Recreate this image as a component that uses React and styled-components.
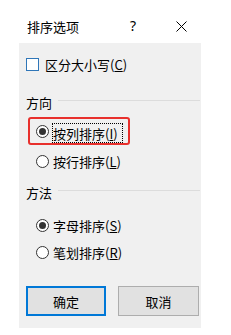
import React from 'react'
import styled, { createGlobalStyle } from 'styled-components'

const GlobalStyle = createGlobalStyle`
	body {
		margin: 0;
		background: #ffffff;
		font-family: 'Noto Sans CJK SC', 'Noto Sans', sans-serif;
		font-size: 13px;
		color: #000000;
	}
`

const Dialog = styled.div`
	display: flex;
	flex-direction: column;
	width: 182px;
	margin-left: 19px;
`

const TitleBar = styled.div`
	display: flex;
	align-items: center;
	height: 43px;
	padding-left: 8px;
	background: #ffffff;
`

const Title = styled.div`
	flex: 1;
	font-size: 13px;
	line-height: 1;
	padding-top: 9px;
`

const Help = styled.div`
	width: 12px;
	margin-right: 37px;
	padding-top: 9px;
	font-family: 'Noto Sans', sans-serif;
	font-size: 14px;
	line-height: 1;
	text-align: center;
`

const Close = styled.div`
	display: flex;
	width: 11px;
	height: 11px;
	margin-right: 14px;
	margin-top: 9px;
`

const Body = styled.div`
	display: flex;
	flex-direction: column;
	padding: 0 0 12px 7px;
	background: #f0f0f0;
`

const Row = styled.div`
	display: flex;
	align-items: center;
	height: ${(p) => p.h || 20}px;
	margin-top: ${(p) => p.mt || 0}px;
	margin-left: ${(p) => p.ml || 0}px;
	white-space: nowrap;
	line-height: 1;
`

const CheckBox = styled.span`
	box-sizing: border-box;
	width: 13px;
	height: 13px;
	margin-right: 6px;
	border: 1px solid #2f76b8;
	background: #ffffff;
`

const Radio = styled.span`
	box-sizing: border-box;
	display: flex;
	align-items: center;
	justify-content: center;
	width: 13px;
	height: 13px;
	margin-right: 4px;
	border: 1px solid #333333;
	border-radius: 50%;
	background: #ffffff;

	&::after {
		content: '';
		display: ${(p) => (p.checked ? 'block' : 'none')};
		width: 7px;
		height: 7px;
		border-radius: 50%;
		background: #333333;
	}
`

const GroupHeader = styled.div`
	display: flex;
	align-items: flex-start;
	height: 18px;
	margin-top: ${(p) => p.mt}px;
	line-height: 18px;
`

const GroupLine = styled.div`
	flex: 1;
	height: 1px;
	margin: 6px 1px 0 6px;
	background: #dcdcdc;
`

const Highlight = styled.div`
	box-sizing: border-box;
	display: flex;
	align-items: center;
	align-self: flex-start;
	height: 28px;
	margin: 5px 0 0 2px;
	padding: 0 5px 0 6px;
	border: 2px solid #e8302c;
	border-radius: 3px;
`

const FocusLabel = styled.span`
	display: flex;
	align-items: center;
	height: 20px;
	margin-left: -1px;
	margin-top: 4px;
	padding: 0 5px 0 1px;
	outline: 1px dotted #000000;
	outline-offset: -1px;
`

const Key = styled.span`
	text-decoration: underline;
	text-underline-offset: 1px;
`

const Buttons = styled.div`
	display: flex;
	gap: 12px;
	margin-top: 24px;
`

const Button = styled.div`
	box-sizing: border-box;
	display: flex;
	align-items: center;
	justify-content: center;
	width: ${(p) => p.w}px;
	height: 30px;
	background: #e1e1e1;
	border: ${(p) => (p.primary ? '2px solid #0078d7' : '1px solid #adadad')};
`

const Label = ({ text, k }) => (
	<span>
		{text}(<Key>{k}</Key>)
	</span>
)

export default function App() {
	return (
		<>
			<GlobalStyle />
			<Dialog>
				<TitleBar>
					<Title>排序选项</Title>
					<Help>?</Help>
					<Close>
						<svg width="11" height="11" viewBox="0 0 11 11">
							<path d="M0.5 0.5L10.5 10.5M10.5 0.5L0.5 10.5" stroke="#000" strokeWidth="1" />
						</svg>
					</Close>
				</TitleBar>
				<Body>
					<Row h={43}>
						<CheckBox />
						<Label text="区分大小写" k="C" />
					</Row>
					<GroupHeader mt={8}>
						方向
						<GroupLine />
					</GroupHeader>
					<Highlight>
						<Radio checked />
						<FocusLabel>
							<Label text="按列排序" k="I" />
						</FocusLabel>
					</Highlight>
					<Row mt={6} ml={10}>
						<Radio />
						<Label text="按行排序" k="L" />
					</Row>
					<GroupHeader mt={13}>
						方法
						<GroupLine />
					</GroupHeader>
					<Row mt={13} ml={10}>
						<Radio checked />
						<Label text="字母排序" k="S" />
					</Row>
					<Row mt={7} ml={10}>
						<Radio />
						<Label text="笔划排序" k="R" />
					</Row>
					<Buttons>
						<Button primary w={80}>确定</Button>
						<Button w={81}>取消</Button>
					</Buttons>
				</Body>
			</Dialog>
		</>
	)
}
